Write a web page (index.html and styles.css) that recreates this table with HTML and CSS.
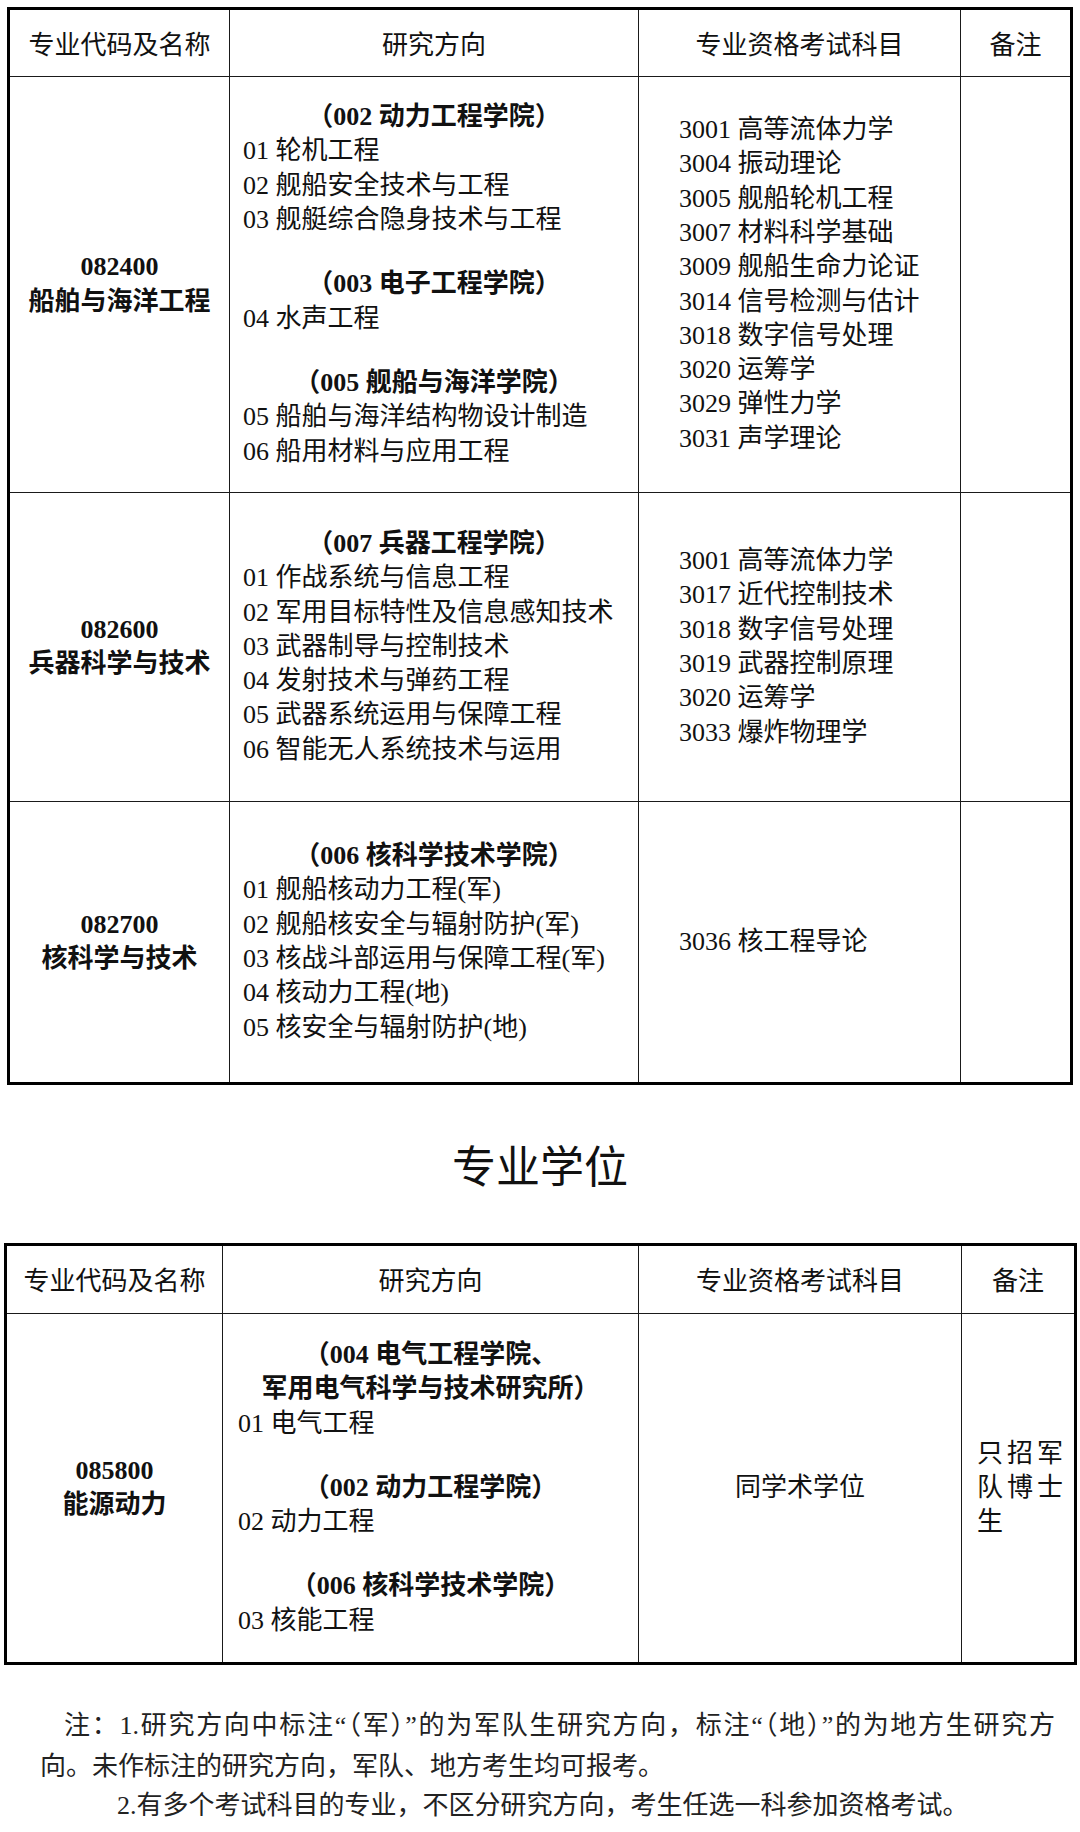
FILE: index.html
```html
<!DOCTYPE html>
<html lang="zh-CN">
<head>
<meta charset="utf-8">
<title>专业资格考试科目</title>
<link rel="stylesheet" href="styles.css">
</head>
<body>
<div class="page">
  <div class="grid t1">
    <div class="cell head">专业代码及名称</div>
    <div class="cell head">研究方向</div>
    <div class="cell head">专业资格考试科目</div>
    <div class="cell head">备注</div>

    <div class="cell major"><div class="b">082400</div><div class="b">船舶与海洋工程</div></div>
    <div class="cell dirs">
      <div class="grp">
        <div class="gh">（002 动力工程学院）</div>
        <div>01 轮机工程</div>
        <div>02 舰船安全技术与工程</div>
        <div>03 舰艇综合隐身技术与工程</div>
      </div>
      <div class="grp">
        <div class="gh">（003 电子工程学院）</div>
        <div>04 水声工程</div>
      </div>
      <div class="grp">
        <div class="gh">（005 舰船与海洋学院）</div>
        <div>05 船舶与海洋结构物设计制造</div>
        <div>06 船用材料与应用工程</div>
      </div>
    </div>
    <div class="cell subj">
      <div>3001 高等流体力学</div>
      <div>3004 振动理论</div>
      <div>3005 舰船轮机工程</div>
      <div>3007 材料科学基础</div>
      <div>3009 舰船生命力论证</div>
      <div>3014 信号检测与估计</div>
      <div>3018 数字信号处理</div>
      <div>3020 运筹学</div>
      <div>3029 弹性力学</div>
      <div>3031 声学理论</div>
    </div>
    <div class="cell"></div>

    <div class="cell major"><div class="b">082600</div><div class="b">兵器科学与技术</div></div>
    <div class="cell dirs">
      <div class="grp">
        <div class="gh">（007 兵器工程学院）</div>
        <div>01 作战系统与信息工程</div>
        <div>02 军用目标特性及信息感知技术</div>
        <div>03 武器制导与控制技术</div>
        <div>04 发射技术与弹药工程</div>
        <div>05 武器系统运用与保障工程</div>
        <div>06 智能无人系统技术与运用</div>
      </div>
    </div>
    <div class="cell subj">
      <div>3001 高等流体力学</div>
      <div>3017 近代控制技术</div>
      <div>3018 数字信号处理</div>
      <div>3019 武器控制原理</div>
      <div>3020 运筹学</div>
      <div>3033 爆炸物理学</div>
    </div>
    <div class="cell"></div>

    <div class="cell major"><div class="b">082700</div><div class="b">核科学与技术</div></div>
    <div class="cell dirs">
      <div class="grp">
        <div class="gh">（006 核科学技术学院）</div>
        <div>01 舰船核动力工程(军)</div>
        <div>02 舰船核安全与辐射防护(军)</div>
        <div>03 核战斗部运用与保障工程(军)</div>
        <div>04 核动力工程(地)</div>
        <div>05 核安全与辐射防护(地)</div>
      </div>
    </div>
    <div class="cell subj">
      <div>3036 核工程导论</div>
    </div>
    <div class="cell"></div>
  </div>

  <h2 class="title">专业学位</h2>

  <div class="grid t2">
    <div class="cell head">专业代码及名称</div>
    <div class="cell head">研究方向</div>
    <div class="cell head">专业资格考试科目</div>
    <div class="cell head">备注</div>

    <div class="cell major"><div class="b">085800</div><div class="b">能源动力</div></div>
    <div class="cell dirs dirs2">
      <div class="grp">
        <div class="gh">（004 电气工程学院、</div>
        <div class="gh">军用电气科学与技术研究所）</div>
        <div>01 电气工程</div>
      </div>
      <div class="grp">
        <div class="gh">（002 动力工程学院）</div>
        <div>02 动力工程</div>
      </div>
      <div class="grp">
        <div class="gh">（006 核科学技术学院）</div>
        <div>03 核能工程</div>
      </div>
    </div>
    <div class="cell center">同学术学位</div>
    <div class="cell remark"><p>只招军队博士生</p></div>
  </div>

  <div class="notes">
    <div class="n1">
      <span class="line1">注：1.研究方向中标注“（军）”的为军队生研究方向，标注“（地）”的为地方生研究方</span>
      <span class="line2">向。未作标注的研究方向，军队、地方考生均可报考。</span>
    </div>
    <div class="n2">2.有多个考试科目的专业，不区分研究方向，考生任选一科参加资格考试。</div>
  </div>
</div>
</body>
</html>
```

FILE: styles.css
```css
html, body {
  margin: 0;
  padding: 0;
  background: #fff;
}

body {
  width: 1080px;
  color: #111;
  font-family: "Liberation Serif", "Noto Sans CJK SC", serif;
  font-size: 26px;
}

.page {
  padding-top: 7px;
}

.grid {
  display: grid;
  width: max-content;
  gap: 1px;
  background: #1a1a1a;
  border: 3px solid #000;
}

.t1 {
  margin-left: 7px;
  grid-template-columns: 219px 408px 321px 109px;
  grid-template-rows: 66px 415px 308px 280px;
}

.t2 {
  margin-left: 4px;
  grid-template-columns: 215px 415px 322px 112px;
  grid-template-rows: 67px 348px;
}

.cell {
  background: #fff;
  display: flex;
  flex-direction: column;
  justify-content: center;
  line-height: 34.3px;
}

.head {
  align-items: center;
  font-family: "Noto Sans CJK SC", sans-serif;
  font-size: 26px;
  color: #111;
}

.major {
  align-items: center;
  text-align: center;
}

.b {
  font-weight: 700;
}

.dirs {
  padding-left: 13px;
}

.dirs2 {
  padding-left: 15px;
}

.grp + .grp {
  margin-top: 30px;
}

.gh {
  font-weight: 700;
  text-align: center;
  margin-left: -13px;
}

.dirs2 .gh {
  margin-left: -15px;
}

.subj {
  padding-left: 40px;
}

.center {
  align-items: center;
}

.remark {
  padding: 0 11px 0 15px;
}

.remark p {
  margin: 0;
  text-align: justify;
  line-height: 34px;
  padding-bottom: 1px;
}

.title {
  margin: 0;
  height: 158px;
  line-height: 158px;
  text-align: center;
  font-family: "Noto Sans CJK SC", sans-serif;
  font-size: 44px;
  font-weight: 400;
  color: #111;
}

.notes {
  padding-top: 40px;
  font-size: 26px;
  color: #222;
}

.n1 {
  padding-left: 40px;
  width: 1015px;
  line-height: 41px;
}

.line1 {
  display: block;
  padding-left: 24px;
  text-align: justify;
  text-align-last: justify;
  white-space: nowrap;
}

.line2 {
  display: block;
}

.n2 {
  padding-left: 117px;
  line-height: 37px;
}
```
